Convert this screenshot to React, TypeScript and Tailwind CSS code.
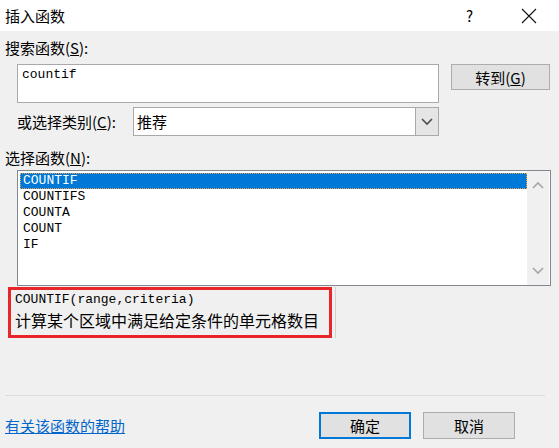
import React, { useState } from 'react';

const ui = { fontFamily: '"Noto Sans CJK SC", "Microsoft YaHei", sans-serif' };
const mono = { fontFamily: '"Liberation Mono", "Noto Sans CJK SC", monospace' };

const functions = ['COUNTIF', 'COUNTIFS', 'COUNTA', 'COUNT', 'IF'];

function Chevron({ up, color = '#a6a6a6' }: { up?: boolean; color?: string }) {
  return (
    <svg width="12" height="8" viewBox="0 0 12 8" fill="none">
      <path
        d={up ? 'M1 7 L6 2 L11 7' : 'M1 1 L6 6 L11 1'}
        stroke={color}
        strokeWidth="1.6"
      />
    </svg>
  );
}

export default function App() {
  const [selected, setSelected] = useState(0);
  const [query, setQuery] = useState('countif');

  return (
    <div className="w-[559px] h-[448px] bg-[#f0f0f0] text-black overflow-hidden" style={ui}>
      {/* 标题栏 */}
      <div className="h-[31px] bg-white flex items-center pl-[5px]">
        <span className="text-[15px] leading-[18px]">插入函数</span>
        <div className="ml-auto flex items-center">
          <span className="text-[15px] leading-none mr-[48px]">?</span>
          <svg width="16" height="16" viewBox="0 0 16 16" className="mr-[22px]">
            <path d="M1 1 L15 15 M15 1 L1 15" stroke="#111" strokeWidth="1.1" />
          </svg>
        </div>
      </div>

      <div className="pl-[5px]">
        <div className="mt-[8px] text-[15px] leading-[18px]">
          搜索函数(<span className="underline">S</span>):
        </div>

        <div className="mt-[7px] ml-[12px] flex items-start">
          <textarea
            value={query}
            onChange={(e) => setQuery(e.target.value)}
            className="w-[422px] h-[39px] bg-white border border-[#a9a9a9] resize-none outline-none px-[4px] py-[2px] text-[13px] leading-[16px]"
            style={mono}
          />
          <button className="ml-[12px] w-[99px] h-[26px] bg-[#e1e1e1] border border-[#adadad] text-[15px] leading-none">
            转到(<span className="underline">G</span>)
          </button>
        </div>

        <div className="mt-[4px] ml-[12px] flex items-center h-[29px]">
          <span className="text-[15px] leading-[18px] w-[116px]">
            或选择类别(<span className="underline">C</span>):
          </span>
          <div className="w-[306px] h-[29px] bg-white border border-[#a9a9a9] flex items-stretch">
            <span className="flex-1 pl-[3px] text-[15px] leading-[27px]">推荐</span>
            <div className="w-[23px] bg-[#e5e5e5] border-l border-[#a9a9a9] flex items-center justify-center">
              <Chevron color="#4d4d4d" />
            </div>
          </div>
        </div>

        <div className="mt-[13px] text-[15px] leading-[18px]">
          选择函数(<span className="underline">N</span>):
        </div>

        <div className="mt-[3px] ml-[12px] w-[534px] h-[116px] bg-white border border-[#828790] flex">
          <div className="flex-1 pt-[2px] pl-[2px]">
            {functions.map((f, i) => (
              <div
                key={f}
                onClick={() => setSelected(i)}
                className={
                  i === selected
                    ? 'h-[16px] pl-[2px] bg-[#0078d7] text-white border border-dotted border-[#e8a04a] text-[13px] leading-[14px]'
                    : 'h-[16px] pl-[3px] text-[13px] leading-[16px]'
                }
                style={mono}
              >
                {f}
              </div>
            ))}
          </div>
          <div className="w-[22px] mr-[1px] bg-[#f0f0f0] flex flex-col items-center justify-between py-[10px]">
            <Chevron up />
            <Chevron />
          </div>
        </div>

        <div className="flex">
          <div className="mt-[1px] ml-[3px] w-[324px] h-[51px] border-[3px] border-[#e8262a] pl-[4px] pt-[2px]">
            <div className="text-[13px] leading-[16px]" style={mono}>
              COUNTIF(range,criteria)
            </div>
            <div className="text-[16px] leading-[22px] mt-[1px]">计算某个区域中满足给定条件的单元格数目</div>
          </div>
          <div className="mt-[1px] ml-[3px] w-[1px] h-[51px] bg-[#d0d0d0]" />
        </div>

        <div className="mt-[57px] w-[540px] h-px bg-[#dcdcdc]" />

        <div className="mt-[16px] flex items-center">
          <a href="#" className="text-[15px] leading-[18px] text-[#0066cc] underline">
            有关该函数的帮助
          </a>
          <button className="ml-[194px] w-[92px] h-[27px] bg-[#e1e1e1] border-2 border-[#0078d7] text-[15px] leading-none">
            确定
          </button>
          <button className="ml-[12px] w-[92px] h-[27px] bg-[#e1e1e1] border border-[#adadad] text-[15px] leading-none">
            取消
          </button>
        </div>
      </div>
    </div>
  );
}
